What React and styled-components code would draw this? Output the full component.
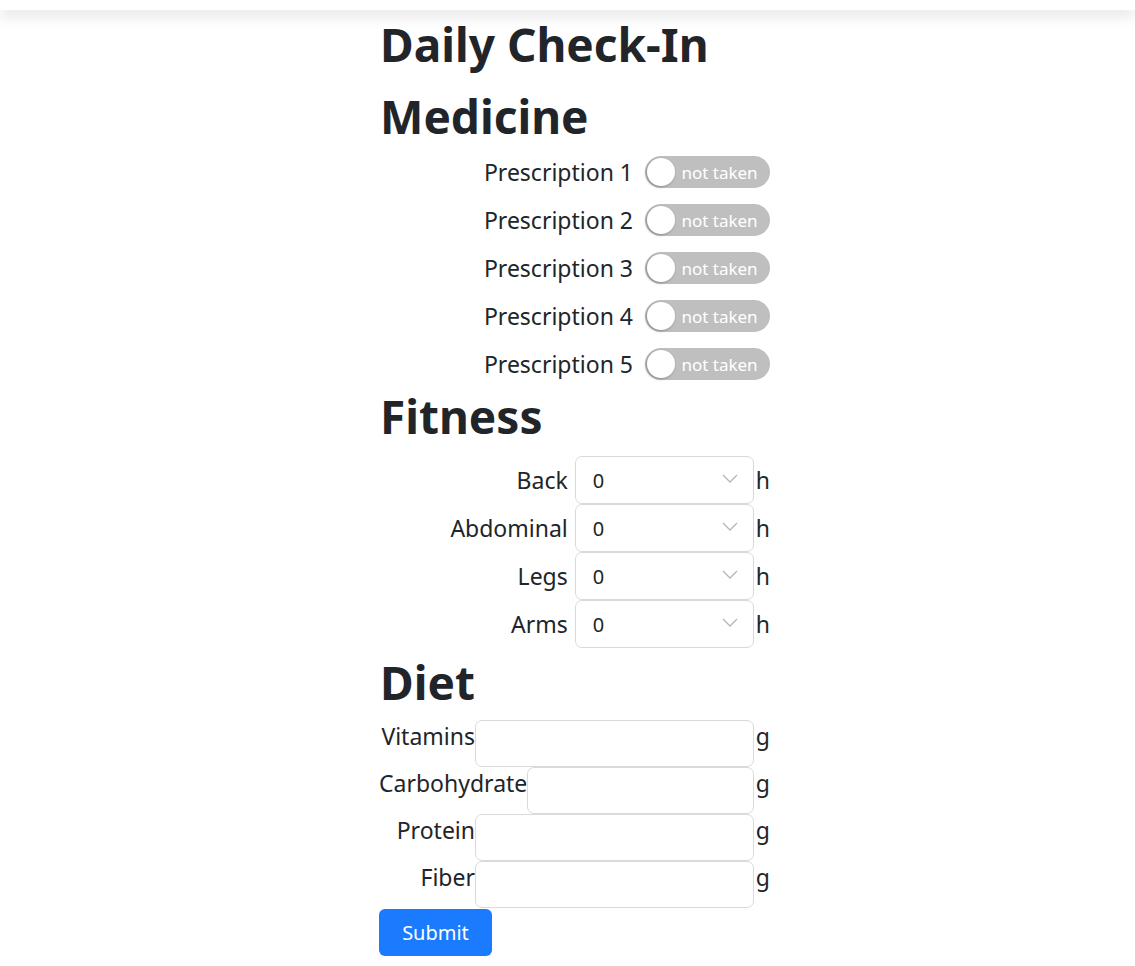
import React, { useState } from "react"
import styled, { createGlobalStyle } from "styled-components"

const Global = createGlobalStyle`
  html, body {
    margin: 0;
    padding: 0;
    background: #fff;
  }
  body {
    font-family: "Noto Sans", "Open Sans", sans-serif;
    color: #212529;
  }
  * { box-sizing: border-box; }
`

const TopBar = styled.div`
  height: 10px;
  background: #fff;
  box-shadow: 0 6px 14px rgba(0, 0, 0, 0.12);
  position: relative;
  z-index: 1;
`

const Page = styled.div`
  padding-left: 15px;
`

const Main = styled.form`
  width: 390px;
  margin: 0 auto;
  padding-top: 2px;
`

const Heading = styled.h1`
  font-size: 46px;
  font-weight: 700;
  line-height: 64px;
  margin: 0 0 ${p => p.$after || 8}px;
`

const List = styled.div`
  display: flex;
  flex-direction: column;
  gap: ${p => p.$gap || 0}px;
  margin-bottom: ${p => p.$after || 0}px;
`

const Row = styled.div`
  display: flex;
  align-items: center;
  justify-content: flex-end;
  font-size: 23px;
  height: ${p => p.$h}px;
`

const Label = styled.label`
  flex: none;
  white-space: nowrap;
  text-align: right;
  min-width: ${p => p.$min || 0}px;
  margin-right: ${p => p.$gap || 0}px;
`

const Switch = styled.button`
  display: flex;
  align-items: center;
  width: 125px;
  height: 32px;
  padding: 2px;
  border: none;
  border-radius: 16px;
  background: #bfbfbf;
  cursor: pointer;
  font-family: inherit;
`

const Knob = styled.span`
  width: 28px;
  height: 28px;
  border-radius: 50%;
  background: #fff;
  box-shadow: -1px 1px 3px rgba(0, 0, 0, 0.3);
  flex: none;
`

const SwitchText = styled.span`
  flex: 1;
  text-align: center;
  color: #fff;
  font-size: 17px;
  padding-right: 4px;
`

const SelectWrap = styled.div`
  position: relative;
  flex: none;
  width: 179px;
  height: 48px;
`

const Select = styled.select`
  appearance: none;
  width: 100%;
  height: 100%;
  border: 1px solid #dadada;
  border-radius: 7px;
  background: #fff;
  padding: 0 0 0 17px;
  font-family: inherit;
  font-size: 20px;
  color: #212529;
`

const Chevron = styled.svg`
  position: absolute;
  right: 16px;
  top: 18px;
  pointer-events: none;
`

const Unit = styled.span`
  flex: none;
  margin-left: ${p => p.$gap || 2}px;
`

const Input = styled.input`
  flex: 1;
  min-width: 0;
  width: 0;
  height: 47px;
  border: 1px solid #dadada;
  border-radius: 7px;
  background: #fff;
  font-family: inherit;
  font-size: 20px;
  padding: 0 12px;
`

const DietRow = styled(Row)`
  justify-content: flex-start;
  align-items: flex-start;
  margin-left: -1px;
`

const Submit = styled.button`
  margin-top: 1px;
  margin-left: -1px;
  width: 113px;
  height: 47px;
  border: none;
  border-radius: 6px;
  background: #1a7bfe;
  color: #fff;
  font-family: inherit;
  font-size: 20px;
  cursor: pointer;
`

const Toggle = ({ name }) => {
  const [on, setOn] = useState(false)
  return (
    <Row $h={32}>
      <Label $gap={12}>{name}</Label>
      <Switch type="button" role="switch" aria-checked={on} onClick={() => setOn(!on)}>
        <Knob />
        <SwitchText>{on ? "taken" : "not taken"}</SwitchText>
      </Switch>
    </Row>
  )
}

const Hours = ({ name }) => (
  <Row $h={48}>
    <Label $gap={7}>{name}</Label>
    <SelectWrap>
      <Select defaultValue="0">
        {[0, 1, 2, 3, 4, 5].map(n => <option key={n} value={n}>{n}</option>)}
      </Select>
      <Chevron width="16" height="10" viewBox="0 0 16 10">
        <path d="M1 1l7 7 7-7" fill="none" stroke="#b5b5b5" strokeWidth="1.3" />
      </Chevron>
    </SelectWrap>
    <Unit>h</Unit>
  </Row>
)

const Grams = ({ name }) => (
  <DietRow $h={47}>
    <Label $min={96}>{name}</Label>
    <Input type="number" />
    <Unit $gap={2}>g</Unit>
  </DietRow>
)

const prescriptions = ["Prescription 1", "Prescription 2", "Prescription 3", "Prescription 4", "Prescription 5"]
const muscles = ["Back", "Abdominal", "Legs", "Arms"]
const nutrients = ["Vitamins", "Carbohydrate", "Protein", "Fiber"]

export default function App() {
  return (
    <>
      <Global />
      <TopBar />
      <Page>
        <Main onSubmit={e => e.preventDefault()}>
          <Heading>Daily Check-In</Heading>
          <Heading as="h2">Medicine</Heading>
          <List $gap={16} $after={4}>
            {prescriptions.map(p => <Toggle key={p} name={p} />)}
          </List>
          <Heading as="h2">Fitness</Heading>
          <List $after={2}>
            {muscles.map(m => <Hours key={m} name={m} />)}
          </List>
          <Heading as="h2" $after={6}>Diet</Heading>
          <List>
            {nutrients.map(n => <Grams key={n} name={n} />)}
          </List>
          <Submit type="submit">Submit</Submit>
        </Main>
      </Page>
    </>
  )
}
